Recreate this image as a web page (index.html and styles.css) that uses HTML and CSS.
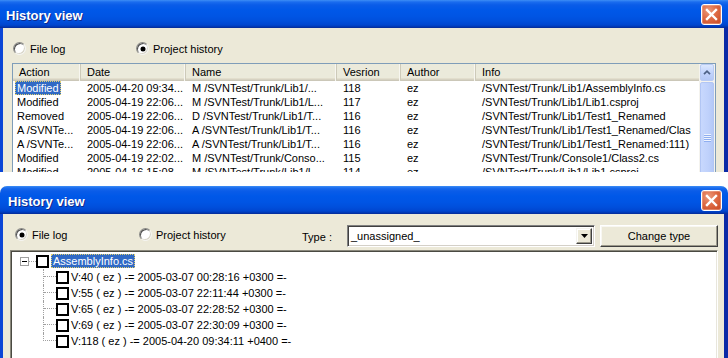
FILE: index.html
```html
<!DOCTYPE html>
<html>
<head>
<meta charset="utf-8">
<title>History view</title>
<link rel="stylesheet" href="styles.css">
</head>
<body>
<div class="win win-top">
  <div class="titlebar">
    <span class="title">History view</span>
    <span class="close"><svg width="13" height="13" viewBox="0 0 13 13"><path d="M2 2 L11 11 M11 2 L2 11" stroke="#fff" stroke-width="2.4" stroke-linecap="square"/></svg></span>
  </div>
  <div class="body body-top">
    <div class="radios radios-top">
      <label class="radio radio-first"><span class="rb"></span>File log</label>
      <label class="radio"><span class="rb on"><i></i></span>Project history</label>
    </div>
    <div class="listview">
      <div class="lv-main">
        <div class="lv-head">
          <div class="hc">Action</div>
          <div class="hc">Date</div>
          <div class="hc">Name</div>
          <div class="hc">Vesrion</div>
          <div class="hc">Author</div>
          <div class="hc hc-last">Info</div>
        </div>
        <div class="lv-row">
          <div class="c c0"><span class="sel">Modified</span></div>
          <div class="c">2005-04-20 09:34...</div>
          <div class="c">M /SVNTest/Trunk/Lib1/...</div>
          <div class="c">118</div>
          <div class="c">ez</div>
          <div class="c">/SVNTest/Trunk/Lib1/AssemblyInfo.cs</div>
        </div>
        <div class="lv-row">
          <div class="c c0"><span>Modified</span></div>
          <div class="c">2005-04-19 22:06...</div>
          <div class="c">M /SVNTest/Trunk/Lib1/L...</div>
          <div class="c">117</div>
          <div class="c">ez</div>
          <div class="c">/SVNTest/Trunk/Lib1/Lib1.csproj</div>
        </div>
        <div class="lv-row">
          <div class="c c0"><span>Removed</span></div>
          <div class="c">2005-04-19 22:06...</div>
          <div class="c">D /SVNTest/Trunk/Lib1/T...</div>
          <div class="c">116</div>
          <div class="c">ez</div>
          <div class="c">/SVNTest/Trunk/Lib1/Test1_Renamed</div>
        </div>
        <div class="lv-row">
          <div class="c c0"><span>A /SVNTe...</span></div>
          <div class="c">2005-04-19 22:06...</div>
          <div class="c">A /SVNTest/Trunk/Lib1/T...</div>
          <div class="c">116</div>
          <div class="c">ez</div>
          <div class="c">/SVNTest/Trunk/Lib1/Test1_Renamed/Clas</div>
        </div>
        <div class="lv-row">
          <div class="c c0"><span>A /SVNTe...</span></div>
          <div class="c">2005-04-19 22:06...</div>
          <div class="c">A /SVNTest/Trunk/Lib1/T...</div>
          <div class="c">116</div>
          <div class="c">ez</div>
          <div class="c">/SVNTest/Trunk/Lib1/Test1_Renamed:111)</div>
        </div>
        <div class="lv-row">
          <div class="c c0"><span>Modified</span></div>
          <div class="c">2005-04-19 22:02...</div>
          <div class="c">M /SVNTest/Trunk/Conso...</div>
          <div class="c">115</div>
          <div class="c">ez</div>
          <div class="c">/SVNTest/Trunk/Console1/Class2.cs</div>
        </div>
        <div class="lv-row">
          <div class="c c0"><span>Modified</span></div>
          <div class="c">2005-04-16 15:08...</div>
          <div class="c">M /SVNTest/Trunk/Lib1/L...</div>
          <div class="c">114</div>
          <div class="c">ez</div>
          <div class="c">/SVNTest/Trunk/Lib1/Lib1.csproj</div>
        </div>
      </div>
      <div class="vscroll">
        <div class="sb-btn"><svg width="14" height="15" viewBox="0 0 14 15"><path d="M3.5 9.5 L7 6 L10.5 9.5" fill="none" stroke="#4d6185" stroke-width="2"/></svg></div>
        <div class="sb-thumb"><span class="grip"></span></div>
      </div>
    </div>
  </div>
</div>

<div class="win win-bottom">
  <div class="titlebar">
    <span class="title">History view</span>
    <span class="close"><svg width="13" height="13" viewBox="0 0 13 13"><path d="M2 2 L11 11 M11 2 L2 11" stroke="#fff" stroke-width="2.4" stroke-linecap="square"/></svg></span>
  </div>
  <div class="body body-bottom">
    <div class="toolbar">
      <div class="radios radios-bottom">
        <label class="radio radio-first2"><span class="rb on"><i></i></span>File log</label>
        <label class="radio"><span class="rb"></span>Project history</label>
      </div>
      <span class="type-label">Type :</span>
      <div class="combo">
        <span class="combo-text">_unassigned_</span>
        <span class="combo-btn"><svg width="7" height="4" viewBox="0 0 7 4"><path d="M0 0 H7 L3.5 4 Z" fill="#000"/></svg></span>
      </div>
      <button class="btn">Change type</button>
    </div>
    <div class="tree">
      <div class="tree-root">
        <span class="exp"><i></i></span>
        <span class="hline"></span>
        <span class="cb"></span>
        <span class="tsel">AssemblyInfo.cs</span>
      </div>
      <div class="tree-children">
        <div class="tree-item"><span class="conn"><i></i></span><span class="cb"></span><span class="tlabel">V:40 ( ez ) -= 2005-03-07 00:28:16 +0300 =-</span></div>
        <div class="tree-item"><span class="conn"><i></i></span><span class="cb"></span><span class="tlabel">V:55 ( ez ) -= 2005-03-07 22:11:44 +0300 =-</span></div>
        <div class="tree-item"><span class="conn"><i></i></span><span class="cb"></span><span class="tlabel">V:65 ( ez ) -= 2005-03-07 22:28:52 +0300 =-</span></div>
        <div class="tree-item"><span class="conn"><i></i></span><span class="cb"></span><span class="tlabel">V:69 ( ez ) -= 2005-03-07 22:30:09 +0300 =-</span></div>
        <div class="tree-item last"><span class="conn"><i></i></span><span class="cb"></span><span class="tlabel">V:118 ( ez ) -= 2005-04-20 09:34:11 +0400 =-</span></div>
      </div>
    </div>
  </div>
</div>
</body>
</html>
```

FILE: styles.css
```css
* { box-sizing: border-box; }
html, body { margin: 0; padding: 0; background: #fff; }
body {
  width: 728px;
  height: 358px;
  overflow: hidden;
  font-family: "Liberation Sans", Arial, sans-serif;
  font-size: 11px;
  color: #000;
}

/* ---------- window frame ---------- */
.win {
  display: flex;
  flex-direction: column;
  overflow: hidden;
  background: #ece9d8;
}
.win-top { height: 172px; }
.win-bottom { height: 172px; margin-top: 14px; border-radius: 7px 7px 0 0; }

.titlebar {
  flex: none;
  height: 28px;
  display: flex;
  align-items: center;
  justify-content: space-between;
  padding: 0 6px 0 6px;
  background: linear-gradient(to bottom,
    #3d8ef5 0px, #1a6cee 2px, #0a5ce8 5px, #0058e8 10px,
    #0055e4 16px, #004fdc 21px, #0046cf 25px, #0035b0 27px, #0a2a90 28px);
}
.win-bottom .titlebar { padding-left: 8px; padding-right: 6px; }
.title {
  padding-top: 3px;
  color: #fff;
  font-weight: bold;
  font-size: 13px;
  text-shadow: 1px 1px 0 #0f2a8c;
}
.close {
  width: 21px;
  height: 21px;
  border: 1px solid #fff;
  border-radius: 3px;
  display: flex;
  align-items: center;
  justify-content: center;
  background: radial-gradient(circle at 35% 30%, #eb9a7c 0%, #de6b45 45%, #c8471f 100%);
  box-shadow: inset 0 0 0 1px rgba(255,255,255,0.25);
}

.body {
  flex: 1;
  display: flex;
  flex-direction: column;
  border-left: 3px solid #0b46d6;
  border-right: 4px solid #0a2aa6;
  min-height: 0;
}
.body-top { padding: 14px 8px 0 9px; }
.body-bottom { padding: 11px 6px 0 7px; }

/* ---------- radio buttons ---------- */
.radios { display: flex; align-items: center; }
.radios-top { height: 13px; margin-left: 1px; margin-bottom: 8px; }
.radio { display: flex; align-items: center; white-space: nowrap; }
.radio-first { width: 123px; }
.radio-first2 { width: 124px; }
.rb {
  width: 13px;
  height: 13px;
  margin-right: 4px;
  border-radius: 50%;
  background: #fff;
  border: 1px solid;
  border-color: #8a8a86 #f4f4f0 #f4f4f0 #8a8a86;
  box-shadow: inset 1px 1px 0 #505050, inset -1px -1px 0 #d8d5c8;
  display: flex;
  align-items: center;
  justify-content: center;
}
.rb i {
  width: 4px;
  height: 4px;
  border-radius: 50%;
  background: #000;
  box-shadow: 0 0 0 0.5px #000;
}

/* ---------- list view ---------- */
.listview {
  flex: none;
  height: 140px;
  display: flex;
  background: #fff;
  border: 1px solid #7f9db9;
}
.lv-main { flex: 1; min-width: 0; overflow: hidden; }
.lv-head, .lv-row {
  display: grid;
  grid-template-columns: 68px 105px 151px 64px 75px 1fr;
}
.lv-head {
  height: 17px;
  background: #ebeadb;
  box-shadow: inset 0 -1px 0 #cbc7b8, inset 0 -2px 0 #d6d2c2, inset 0 -3px 0 #e2decd;
}
.hc {
  padding-left: 6px;
  line-height: 16px;
  white-space: nowrap;
  border-right: 1px solid #cdcab9;
  box-shadow: inset -1px 0 0 #f7f6f0;
}
.hc-last { border-right: none; box-shadow: none; }
.lv-row { height: 14px; line-height: 14px; }
.c { padding-left: 6px; white-space: nowrap; overflow: hidden; }
.c0 { padding-left: 2px; }
.c0 span { display: inline-block; padding: 0 2px; height: 14px; }
.c0 .sel {
  background: #316ac5;
  color: #fff;
  outline: 1px dotted #e0d070;
  outline-offset: -1px;
}

/* ---------- scrollbar ---------- */
.vscroll {
  flex: none;
  width: 16px;
  display: flex;
  flex-direction: column;
  background: #f4f3ee;
}
.sb-btn {
  flex: none;
  height: 17px;
  margin: 0 1px 0 1px;
  border: 1px solid #b9cbf3;
  border-radius: 2px;
  background: linear-gradient(to bottom, #dde8fe, #c2d4fc 50%, #b4c8f6);
  display: flex;
  align-items: center;
  justify-content: center;
}
.sb-thumb {
  flex: none;
  height: 112px;
  margin: 1px 1px 0 1px;
  border: 1px solid #b2c6f4;
  border-radius: 2px;
  background: linear-gradient(to right, #c8d8fd, #bfd1fb 60%, #b5c9f7);
  display: flex;
  align-items: center;
  justify-content: center;
}
.grip {
  width: 7px;
  height: 8px;
  background: repeating-linear-gradient(to bottom, #eef3fe 0px, #eef3fe 1px, #8faef0 1px, #8faef0 2px);
}

/* ---------- bottom toolbar ---------- */
.toolbar { flex: none; display: flex; align-items: center; height: 22px; }
.radios-bottom { width: 292px; padding-left: 5px; align-self: flex-start; margin-top: 3px; }
.type-label { width: 45px; white-space: nowrap; padding-top: 2px; }
.combo {
  width: 248px;
  height: 22px;
  display: flex;
  align-items: center;
  justify-content: space-between;
  background: #fff;
  border: 1px solid;
  border-color: #808080 #fff #fff #808080;
  box-shadow: inset 1px 1px 0 #404040, inset -1px -1px 0 #d4d0c8;
  padding: 2px 2px 2px 3px;
}
.combo-text { white-space: nowrap; }
.combo-btn {
  width: 16px;
  height: 16px;
  background: #ece9d8;
  border: 1px solid;
  border-color: #f4f3ee #404040 #404040 #f4f3ee;
  box-shadow: inset -1px -1px 0 #9d9a8c, inset 1px 1px 0 #fff;
  display: flex;
  align-items: center;
  justify-content: center;
}
.btn {
  margin-left: 5px;
  width: 118px;
  height: 22px;
  font-family: inherit;
  font-size: 11px;
  color: #000;
  background: #ece9d8;
  border: 1px solid;
  border-color: #fff #404040 #404040 #fff;
  box-shadow: inset -1px -1px 0 #9d9a8c, inset 1px 1px 0 #f8f7f2;
  padding: 0;
}

/* ---------- tree ---------- */
.tree {
  flex: none;
  height: 130px;
  margin-top: 3px;
  background: #fff;
  border: 1px solid;
  border-color: #8a887c #fff #fff #8a887c;
  box-shadow: inset 1px 1px 0 #4a4a42, inset -1px -1px 0 #e8e6dc;
  padding: 2px 0 0 9px;
}
.tree-root { display: flex; align-items: center; height: 16px; }
.exp {
  width: 9px;
  height: 9px;
  border: 1px solid #a0a0a0;
  background: #fff;
  display: flex;
  align-items: center;
  justify-content: center;
}
.exp i { width: 5px; height: 1px; background: #000; }
.hline { width: 7px; height: 1px; border-top: 1px dotted #a0a0a0; }
.cb {
  flex: none;
  width: 13px;
  height: 13px;
  border: 2px solid #000;
  background: #fff;
}
.tsel {
  margin-left: 2px;
  padding: 0 2px;
  line-height: 14px;
  height: 14px;
  background: #316ac5;
  color: #fff;
  white-space: nowrap;
  outline: 1px dotted #e0d070;
  outline-offset: -1px;
}
.tree-children { margin-left: 23px; }
.tree-item { display: flex; align-items: center; height: 16px; }
.conn {
  flex: none;
  width: 13px;
  height: 16px;
  border-left: 1px dotted #a0a0a0;
}
.conn i { display: block; height: 8px; border-bottom: 1px dotted #a0a0a0; }
.tree-item.last .conn { border-left: none; }
.tree-item.last .conn i { border-left: 1px dotted #a0a0a0; }
.tlabel { margin-left: 1px; padding: 0 1px; white-space: nowrap; line-height: 14px; }
```
